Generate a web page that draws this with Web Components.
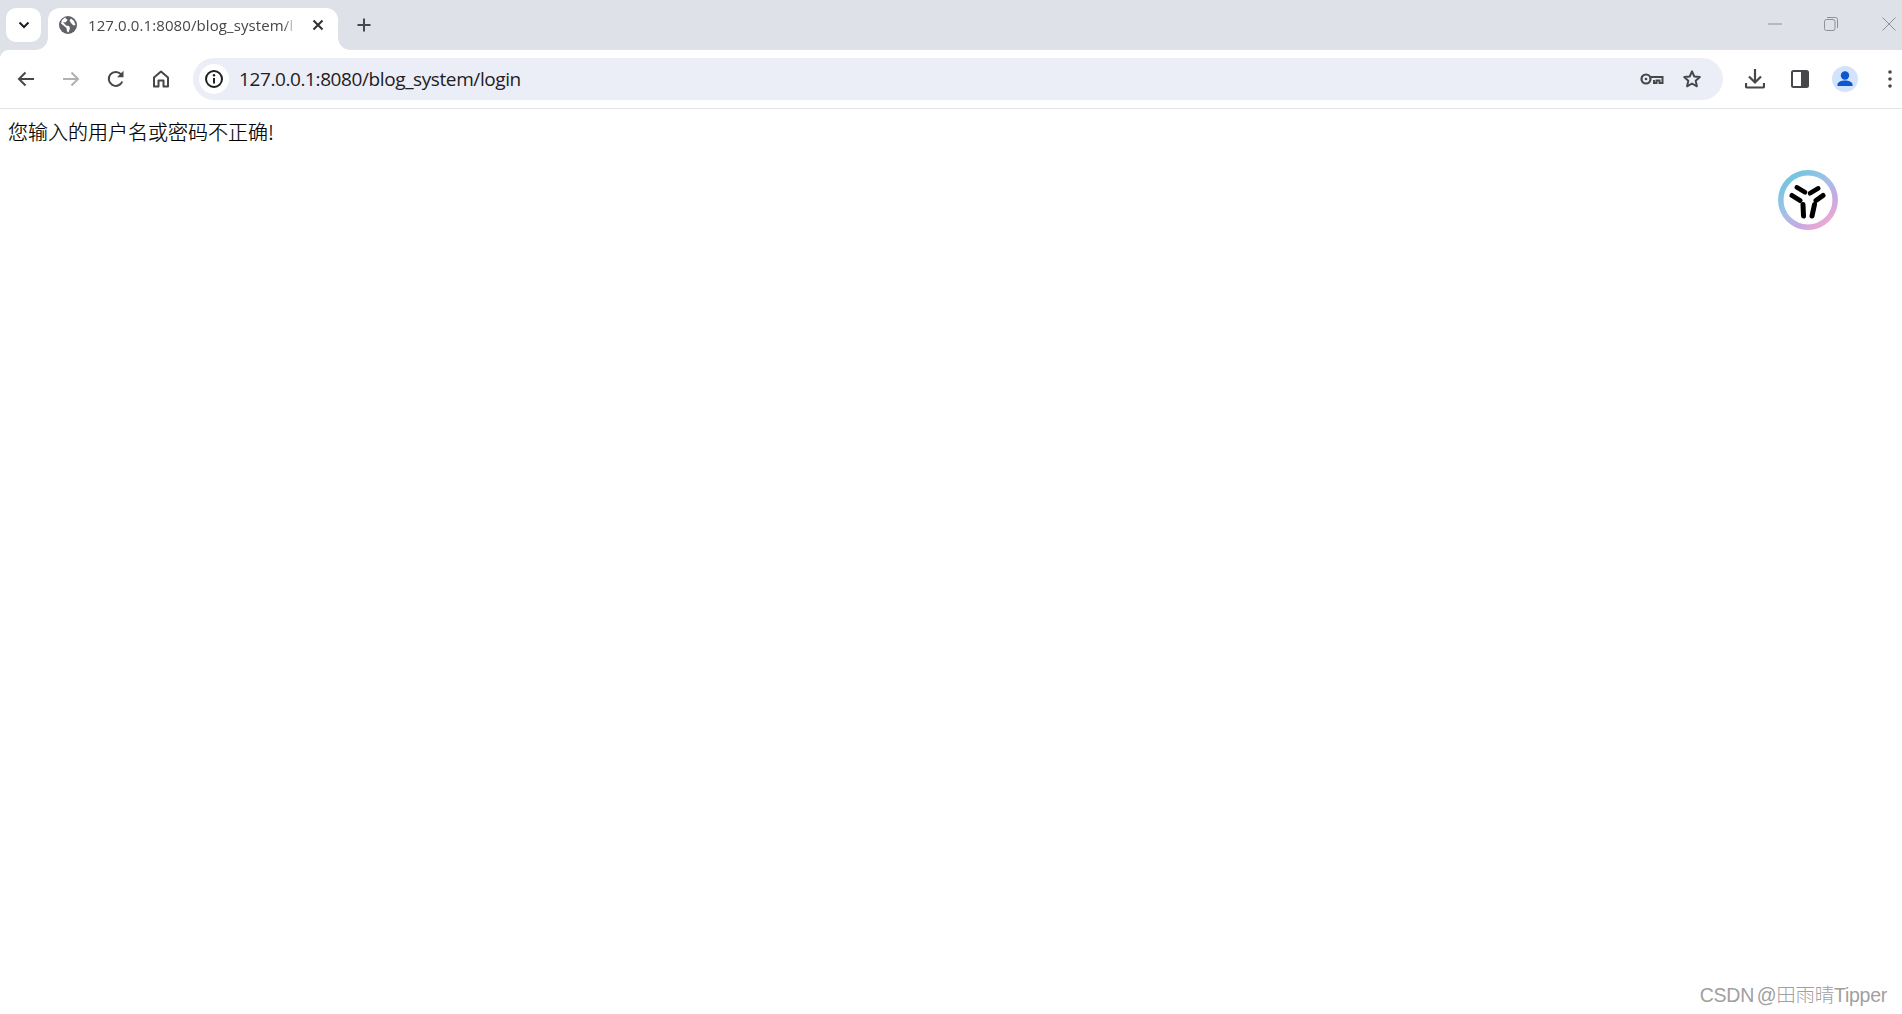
<!DOCTYPE html>
<html lang="zh">
<head>
<meta charset="utf-8">
<title>127.0.0.1:8080/blog_system/login</title>
<style>
  html, body { margin: 0; height: 100%; background: #fff; }
  body { display: flex; flex-direction: column; height: 1014px; overflow: hidden; position: relative; }
</style>
</head>
<body>
<browser-tabstrip title-text="127.0.0.1:8080/blog_system/l"></browser-tabstrip>
<browser-toolbar url="127.0.0.1:8080/blog_system/login"></browser-toolbar>
<page-view>您输入的用户名或密码不正确!</page-view>
<floating-logo></floating-logo>
<page-watermark>CSDN @田雨晴Tipper</page-watermark>

<script>
class BrowserTabstrip extends HTMLElement {
  constructor() {
    super();
    this.attachShadow({ mode: 'open' });
  }

  connectedCallback() {
    const title = this.getAttribute('title-text') || '';
    this.shadowRoot.innerHTML = `
      <style>
        :host {
          display: flex;
          flex: none;
          height: 50px;
          padding-top: 8px;
          box-sizing: border-box;
          background: #dee1e7;
          font-family: "Open Sans", "Liberation Sans", sans-serif;
        }
        .tab-search {
          flex: none;
          width: 35px;
          height: 34px;
          margin-left: 6px;
          background: #fff;
          border-radius: 10px;
          display: flex;
          align-items: center;
          justify-content: center;
        }
        .tab {
          flex: none;
          position: relative;
          width: 290px;
          height: 42px;
          margin-left: 7px;
          background: #fff;
          border-radius: 12px 12px 0 0;
          display: flex;
          align-items: center;
          color: #45474a;
          font-size: 15px;
          padding-bottom: 8px;
          box-sizing: border-box;
        }
        .tab::before, .tab::after {
          content: '';
          position: absolute;
          bottom: 0;
          width: 12px;
          height: 12px;
        }
        .tab::before { left: -12px; background: radial-gradient(circle at 0 0, transparent 11.5px, #fff 12px); }
        .tab::after { right: -12px; background: radial-gradient(circle at 100% 0, transparent 11.5px, #fff 12px); }
        .favicon { flex: none; margin-left: 10px; width: 20px; height: 20px; }
        .title {
          flex: none;
          width: 208px;
          margin-left: 10px;
          white-space: nowrap;
          letter-spacing: 0.1px;
          -webkit-mask-image: linear-gradient(to right, #000 196px, transparent 208px);
          mask-image: linear-gradient(to right, #000 196px, transparent 208px);
        }
        .close { flex: none; margin-left: 16px; display: flex; }
        .new-tab { flex: none; margin-left: 11px; width: 30px; height: 34px; display: flex; align-items: center; justify-content: center; }
        .spacer { flex: 1; }
        .win { flex: none; width: 56px; height: 34px; display: flex; align-items: center; justify-content: center; margin-top: -1px; }
        .win:last-child { width: 26px; margin-left: 17px; }
        .win svg { display: block; }
      </style>
      <div class="tab-search">
        <svg width="12" height="8" viewBox="0 0 12 8"><path d="M1.5 1.5 6 6l4.500-4.500" fill="none" stroke="#1f2022" stroke-width="2"/></svg>
      </div>
      <div class="tab">
        <svg class="favicon" viewBox="0 0 20 20">
          <circle cx="10" cy="10" r="9" fill="#5f6368"/>
          <path d="M7 2.500 9.500 5 7.500 7.500 5 7 8 10.500 11 11 12 13 10.500 17.500 9 16.500 8.500 13 3 8.500 4 5ZM13 3.500 16 6l1.500 4-2 .5L13 8l-1.500-2.500Z" fill="#fff"/>
        </svg>
        <div class="title">${title}</div>
        <svg class="close" width="12" height="12" viewBox="0 0 12 12"><path d="M1.500 1.500l9 9M10.500 1.500l-9 9" stroke="#303134" stroke-width="2"/></svg>
      </div>
      <div class="new-tab">
        <svg width="14" height="14" viewBox="0 0 14 14"><path d="M7 .5v13M.5 7h13" stroke="#45474a" stroke-width="2"/></svg>
      </div>
      <div class="spacer"></div>
      <div class="win"><svg width="14" height="2" viewBox="0 0 14 2"><path d="M0 1h14" stroke="#8e9197" stroke-width="1"/></svg></div>
      <div class="win"><svg width="14" height="14" viewBox="0 0 14 14" fill="none" stroke="#8e9197"><rect x=".5" y="2.500" width="10.500" height="11" rx="2"/><path d="M3 .5h8.500a2 2 0 0 1 2 2V11"/></svg></div>
      <div class="win"><svg width="14" height="14" viewBox="0 0 14 14"><path d="M.5.5l13 13M13.500.5l-13 13" stroke="#8e9197"/></svg></div>
    `;
  }
}

class ToolbarButton extends HTMLElement {
  constructor() {
    super();
    this.attachShadow({ mode: 'open' });
    this.shadowRoot.innerHTML = `
      <style>
        :host {
          display: flex;
          flex: none;
          width: 45px;
          height: 42px;
          align-items: center;
          justify-content: center;
        }
        :host([narrow]) { width: 25px; padding-left: 10px; }
      </style>
      <slot></slot>
    `;
  }
}

class BrowserToolbar extends HTMLElement {
  constructor() {
    super();
    this.attachShadow({ mode: 'open' });
  }

  connectedCallback() {
    const url = this.getAttribute('url') || '';
    this.shadowRoot.innerHTML = `
      <style>
        :host {
          display: flex;
          flex: none;
          position: relative;
          height: 59px;
          box-sizing: border-box;
          padding: 8px 0 0 3px;
          background: #fff;
          border-bottom: 1px solid #e3e4e6;
          font-family: "Open Sans", "Liberation Sans", sans-serif;
        }
        :host::before {
          content: '';
          position: absolute;
          left: 0;
          top: 0;
          width: 8px;
          height: 8px;
          background: radial-gradient(circle at 100% 100%, transparent 7.500px, #dee1e7 8px);
        }
        .omnibox {
          flex: 1;
          height: 42px;
          margin: 0 9px 0 10px;
          padding-left: 6px;
          box-sizing: border-box;
          background: #ebeef7;
          border-radius: 21px;
          display: flex;
          align-items: center;
        }
        .info {
          flex: none;
          width: 30px;
          height: 30px;
          background: #fff;
          border-radius: 50%;
          display: flex;
          align-items: center;
          justify-content: center;
        }
        .url {
          flex: 1;
          margin-left: 10px;
          font-size: 19px;
          color: #1f2022;
          white-space: nowrap;
          letter-spacing: -0.4px;
        }
        .omni-icon { flex: none; width: 40px; display: flex; justify-content: center; }
        .omni-icon:last-child { margin-right: 11px; }
        svg { display: block; }
      </style>
      <toolbar-button>
        <svg width="18" height="16" viewBox="0 0 18 16"><path d="M17 8H2.500M8.500 1.500 2 8l6.500 6.500" fill="none" stroke="#45474a" stroke-width="2"/></svg>
      </toolbar-button>
      <toolbar-button>
        <svg width="18" height="16" viewBox="0 0 18 16"><path d="M1 8h14.500M9.500 1.500 16 8l-6.500 6.500" fill="none" stroke="#b0b1b3" stroke-width="2"/></svg>
      </toolbar-button>
      <toolbar-button>
        <svg width="18" height="18" viewBox="0 0 18 18"><path d="M15.300 11.500A7 7 0 1 1 14 4.200" fill="none" stroke="#45474a" stroke-width="2"/><path d="M16.500 .8v6.500H10Z" fill="#45474a"/></svg>
      </toolbar-button>
      <toolbar-button>
        <svg width="18" height="18" viewBox="0 0 18 18"><path d="M2 7.500 9 1.500l7 6v9h-4.500v-6h-5v6H2Z" fill="none" stroke="#45474a" stroke-width="2" stroke-linejoin="round"/></svg>
      </toolbar-button>
      <div class="omnibox">
        <div class="info">
          <svg width="20" height="20" viewBox="0 0 20 20"><circle cx="10" cy="10" r="8" fill="none" stroke="#1f2022" stroke-width="2"/><path d="M10 9v5.500" stroke="#1f2022" stroke-width="2"/><circle cx="10" cy="6.300" r="1.200" fill="#1f2022"/></svg>
        </div>
        <div class="url">${url}</div>
        <div class="omni-icon">
          <svg width="24" height="14" viewBox="0 0 24 14"><circle cx="6" cy="7" r="4.500" fill="none" stroke="#45474a" stroke-width="2.200"/><circle cx="6" cy="7" r="1.300" fill="#45474a"/><path d="M10.500 5H22.500V11H19.500V8.500H16.500V11H14V8" fill="none" stroke="#45474a" stroke-width="2"/></svg>
        </div>
        <div class="omni-icon">
          <svg width="20" height="20" viewBox="0 0 20 20"><path d="M10 2.400l2.300 5.100 5.500.6-4.100 3.700 1.200 5.500L10 14.500l-4.900 2.800 1.200-5.500L2.200 8.100l5.500-.6Z" fill="none" stroke="#45474a" stroke-width="2" stroke-linejoin="round"/></svg>
        </div>
      </div>
      <toolbar-button>
        <svg width="20" height="20" viewBox="0 0 20 20"><path d="M10 0v13M4 7.500l6 6 6-6" fill="none" stroke="#45474a" stroke-width="2.200"/><path d="M1 14v3.500a1 1 0 0 0 1 1h16a1 1 0 0 0 1-1V14" fill="none" stroke="#45474a" stroke-width="2.200"/></svg>
      </toolbar-button>
      <toolbar-button>
        <svg width="18" height="18" viewBox="0 0 18 18"><rect x="1" y="1" width="16" height="16" rx="1.500" fill="#fff" stroke="#45474a" stroke-width="2"/><rect x="10" y="1" width="7" height="16" fill="#45474a"/></svg>
      </toolbar-button>
      <toolbar-button>
        <svg width="26" height="26" viewBox="0 0 26 26"><circle cx="13" cy="13" r="13" fill="#d3e3fd"/><circle cx="13" cy="9.500" r="4.200" fill="#0b57d0"/><path d="M5.500 20v-1.500c0-2.500 4-4 7.500-4s7.500 1.500 7.500 4V20Z" fill="#0b57d0"/></svg>
      </toolbar-button>
      <toolbar-button narrow>
        <svg width="4" height="18" viewBox="0 0 4 18"><circle cx="2" cy="2" r="1.800" fill="#45474a"/><circle cx="2" cy="9" r="1.800" fill="#45474a"/><circle cx="2" cy="16" r="1.800" fill="#45474a"/></svg>
      </toolbar-button>
    `;
  }
}

class PageView extends HTMLElement {
  constructor() {
    super();
    this.attachShadow({ mode: 'open' });
    this.shadowRoot.innerHTML = `
      <style>
        :host {
          display: block;
          flex: 1;
          padding: 9px 8px;
          color: #000;
          font: 300 20px/28px "Noto Sans CJK SC", "Liberation Sans", sans-serif;
          -webkit-text-stroke: 0.2px #000;
        }
      </style>
      <slot></slot>
    `;
  }
}

// the floating translate button sits over the page
class FloatingLogo extends HTMLElement {
  constructor() {
    super();
    this.attachShadow({ mode: 'open' });
    this.shadowRoot.innerHTML = `
      <style>
        :host {
          position: absolute;
          left: 1778px;
          top: 170px;
          width: 60px;
          height: 60px;
        }
        svg { display: block; }
      </style>
      <svg width="60" height="60" viewBox="0 0 60 60">
        <defs>
          <linearGradient id="ring" x1="0.15" y1="0.1" x2="0.8" y2="0.95">
            <stop offset="0" stop-color="#72c6e0"/>
            <stop offset="0.45" stop-color="#a7bfe8"/>
            <stop offset="0.75" stop-color="#c7a8e2"/>
            <stop offset="1" stop-color="#eda8d4"/>
          </linearGradient>
        </defs>
        <circle cx="30" cy="30" r="27.200" fill="#fff" stroke="url(#ring)" stroke-width="5.500"/>
        <g stroke="#000" stroke-linecap="round" fill="none">
          <path d="M18.700 17.300 27 22.300M40.300 18.300 32 23.300" stroke-width="4.500"/>
          <path d="M14 25.500 22 30.500M45 25.500 38 30.500" stroke-width="5"/>
          <path d="M25 34.500 25.500 46M36.500 34.500 34 46" stroke-width="5"/>
        </g>
      </svg>
    `;
  }
}

class PageWatermark extends HTMLElement {
  constructor() {
    super();
    this.attachShadow({ mode: 'open' });
    this.shadowRoot.innerHTML = `
      <style>
        :host {
          position: absolute;
          right: 15px;
          bottom: 5px;
          color: #a0a0a0;
          font: 300 19.500px/28px "Liberation Sans", "Noto Sans CJK SC", sans-serif;
          word-spacing: -2.500px;
          letter-spacing: -0.25px;
          white-space: nowrap;
        }
      </style>
      <slot></slot>
    `;
  }
}

customElements.define('browser-tabstrip', BrowserTabstrip);
customElements.define('toolbar-button', ToolbarButton);
customElements.define('browser-toolbar', BrowserToolbar);
customElements.define('page-view', PageView);
customElements.define('floating-logo', FloatingLogo);
customElements.define('page-watermark', PageWatermark);
</script>
</body>
</html>
